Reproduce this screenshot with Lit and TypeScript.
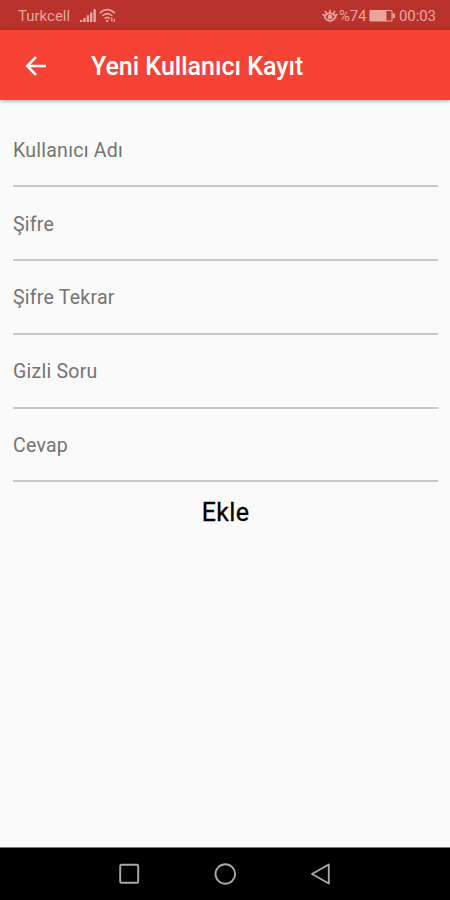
import { LitElement, html, css, svg } from "lit";
import { customElement, property } from "lit/decorators.js";

@customElement("status-bar")
class StatusBar extends LitElement {
  static styles = css`
    :host {
      display: flex;
      align-items: center;
      height: 30px;
      padding: 2px 14px 0 18px;
      box-sizing: border-box;
      background: #b9322b;
      color: #eca49e;
      font-size: 15px;
      line-height: 28px;
    }
    .carrier { width: 62px; }
    .signal { margin-right: 2px; }
    .spacer { flex: 1; }
    .eye { margin-right: 1px; }
    .percent { width: 30px; letter-spacing: -0.2px; }
    .battery { margin-right: 3px; }
    .clock { width: 37px; letter-spacing: -0.1px; white-space: nowrap; }
    svg { display: block; flex: none; }
  `;
  render() {
    return html`
      <span class="carrier">Turkcell</span>
      <svg class="signal" width="17" height="16" viewBox="0 0 17 16" fill="currentColor">
        <path d="M0 12h2.3v2H0zM3.3 10h2.4v4H3.3zM6.7 7.3h2.4V14H6.7zM10 4.5h2.4V14H10zM13.4 1.3h2.5V14h-2.5z" />
      </svg>
      <svg width="18" height="16" viewBox="0 0 18 16" fill="none" stroke="currentColor" stroke-width="1.6">
        <path d="M.8 5.2Q8.3-1.8 15.8 5.2M3.3 8Q8.3 3.3 13.3 8M5.6 10.7Q8.3 8.2 11 10.7" />
        <circle cx="8.3" cy="13" r="1.3" fill="currentColor" stroke="none" />
        <path d="M12.8 9.5v4M15.2 11v3" stroke-width="1.3" />
      </svg>
      <span class="spacer"></span>
      <svg class="eye" width="16" height="14" viewBox="0 0 16 14" fill="none" stroke="currentColor" stroke-width="1.6">
        <path d="M.5 5.2Q3 7.2 4 5.8Q8 2.4 12 5.8Q13 7.2 15.5 5.2M2.3 8Q8 16 13.7 8Q12.5 6 11 5M2.3 8Q3.5 6 5 5M8 4V.8M4.8 4.8L3 2M11.2 4.8L13 2" />
        <circle cx="8" cy="7.9" r="2.4" fill="currentColor" stroke="none" />
      </svg>
      <span class="percent">%74</span>
      <svg class="battery" width="27" height="14" viewBox="0 0 27 14" fill="none" stroke="currentColor" stroke-width="1.2">
        <rect x="1" y="1.5" width="22" height="10.5" rx="1" />
        <path d="M1 1.5h16.5v10.5H1zM23.5 4.5H26v4.5h-2.5z" fill="currentColor" stroke="none" />
      </svg>
      <span class="clock">00:03</span>
    `;
  }
}

@customElement("app-bar")
class AppBar extends LitElement {
  @property() heading = "";
  static styles = css`
    :host {
      display: flex;
      align-items: center;
      height: 70px;
      padding-left: 25px;
      background: #f64336;
      color: #fff;
      box-shadow: 0 1px 4px rgba(0, 0, 0, 0.35);
    }
    svg { display: block; margin-top: 1px; }
    h1 {
      margin: 3px 0 0 45px;
      font-size: 25px;
      font-weight: 500;
      line-height: 30px;
      white-space: nowrap;
    }
  `;
  render() {
    return html`
      <svg width="21" height="20" viewBox="0 0 21 20" fill="none" stroke="currentColor" stroke-width="2.6">
        <path d="M11 1.2L2.2 10l8.8 8.8M2.2 10H21" />
      </svg>
      <h1>${this.heading}</h1>
    `;
  }
}

@customElement("form-field")
class FormField extends LitElement {
  @property() label = "";
  static styles = css`
    :host {
      display: block;
      height: 73.8px;
      box-sizing: border-box;
      padding-top: 24.5px;
      border-bottom: 2px solid #c8c8c8;
      color: #747474;
      font-size: 19.5px;
      line-height: 26px;
      letter-spacing: 0.25px;
    }
  `;
  render() {
    return html`<label>${this.label}</label>`;
  }
}

@customElement("nav-bar")
class NavBar extends LitElement {
  static styles = css`
    :host {
      display: flex;
      justify-content: center;
      align-items: center;
      gap: 74px;
      height: 53px;
      box-sizing: border-box;
      border-top: 1px solid #777;
      background: #000;
    }
    svg { display: block; }
  `;
  render() {
    const shapes = [
      svg`<rect x="2.2" y="1.8" width="18" height="18" rx="1" />`,
      svg`<circle cx="11.3" cy="11" r="9.8" />`,
      svg`<path d="M18.8 1.5v19L2 11z" />`,
    ];
    return shapes.map(
      (s) => html`<svg width="22" height="22" viewBox="0 0 22 22" fill="none" stroke="#a9a9a9" stroke-width="1.9" stroke-linejoin="round">${s}</svg>`
    );
  }
}

@customElement("app-root")
class AppRoot extends LitElement {
  static styles = css`
    :host {
      display: flex;
      flex-direction: column;
      width: 450px;
      height: 900px;
      overflow: hidden;
      background: #fafafa;
      font-family: Roboto, "Liberation Sans", sans-serif;
    }
    main { flex: 1; padding: 13.4px 12px 0 13px; }
    .submit {
      display: block;
      margin: 15px auto 0;
      padding: 0;
      border: 0;
      background: none;
      color: #000;
      font: 400 25px/32px Roboto, sans-serif;
      letter-spacing: 0.3px;
      -webkit-text-stroke: 0.3px #000;
    }
  `;
  render() {
    const labels = ["Kullanıcı Adı", "Şifre", "Şifre Tekrar", "Gizli Soru", "Cevap"];
    return html`
      <status-bar></status-bar>
      <app-bar heading="Yeni Kullanıcı Kayıt"></app-bar>
      <main>
        ${labels.map((l) => html`<form-field label=${l}></form-field>`)}
        <button class="submit">Ekle</button>
      </main>
      <nav-bar></nav-bar>
    `;
  }
}
